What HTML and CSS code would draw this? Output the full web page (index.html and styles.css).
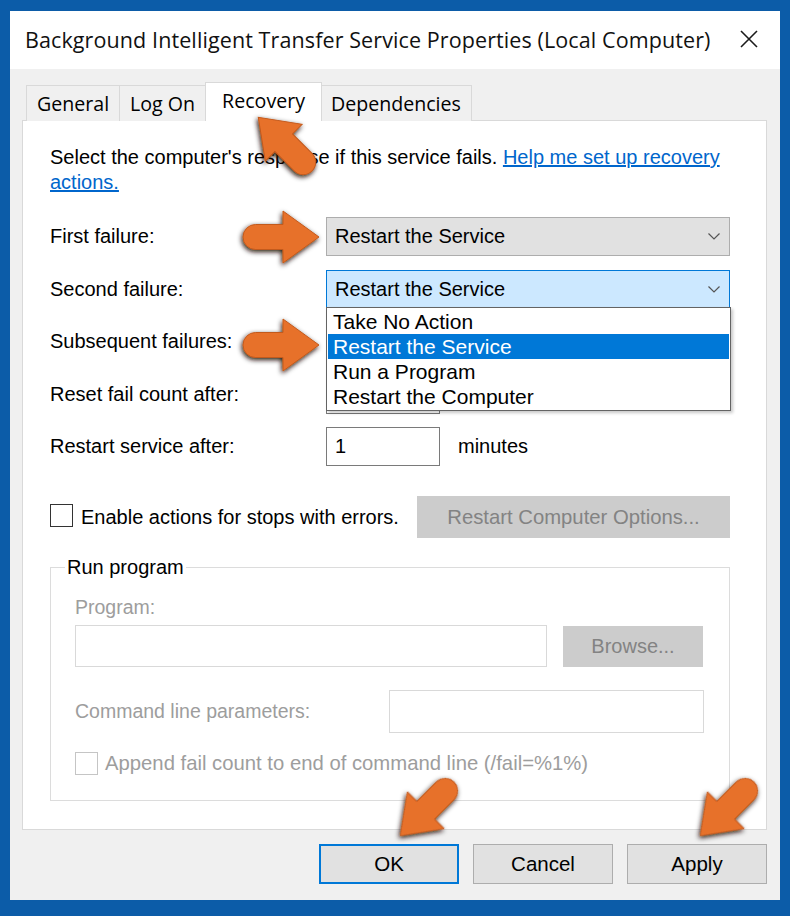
FILE: index.html
```html
<!DOCTYPE html>
<html lang="en">
<head>
<meta charset="utf-8">
<title>Background Intelligent Transfer Service Properties</title>
<link rel="stylesheet" href="styles.css">
</head>
<body>
<div class="window">
  <div class="titlebar">
    <span class="title">Background Intelligent Transfer Service Properties (Local Computer)</span>
    <span class="close"><svg width="18" height="18" viewBox="0 0 18 18"><path d="M1 1 L17 17 M17 1 L1 17" stroke="#1b1b1b" stroke-width="1.6" fill="none"/></svg></span>
  </div>
  <div class="client">
    <div class="tabs">
      <div class="tab">General</div>
      <div class="tab">Log On</div>
      <div class="tab selected">Recovery</div>
      <div class="tab">Dependencies</div>
    </div>
    <div class="panel">
      <p class="intro">Select the computer's response if this service fails. <a class="link" href="#">Help me set up recovery actions.</a></p>
      <div class="form">
        <div class="label">First failure:</div>
        <div class="combo combo-plain"><span>Restart the Service</span><svg class="chev" width="12" height="7" viewBox="0 0 12 7"><polyline points="0.5,0.5 6,6 11.5,0.5" fill="none" stroke="#555" stroke-width="1.2"/></svg></div>
        <div class="label">Second failure:</div>
        <div class="combo combo-focus"><span>Restart the Service</span><svg class="chev" width="12" height="7" viewBox="0 0 12 7"><polyline points="0.5,0.5 6,6 11.5,0.5" fill="none" stroke="#555" stroke-width="1.2"/></svg></div>
        <div class="label">Subsequent failures:</div>
        <div class="combo combo-plain"></div>
        <div class="label">Reset fail count after:</div>
        <div class="cell"><div class="input"></div></div>
        <div class="label">Restart service after:</div>
        <div class="cell"><div class="input">1</div><span class="unit">minutes</span></div>
        <ul class="dropdown">
          <li>Take No Action</li>
          <li class="hl">Restart the Service</li>
          <li>Run a Program</li>
          <li>Restart the Computer</li>
        </ul>
      </div>
      <div class="errors-row">
        <span class="checkbox"></span>
        <span class="check-label">Enable actions for stops with errors.</span>
        <span class="btn-disabled btn-options">Restart Computer Options...</span>
      </div>
      <fieldset class="group">
        <legend>Run program</legend>
        <div class="dim prog-label">Program:</div>
        <div class="prog-row">
          <div class="input-dim prog-input"></div>
          <span class="btn-disabled btn-browse">Browse...</span>
        </div>
        <div class="cmd-row">
          <span class="dim">Command line parameters:</span>
          <div class="input-dim cmd-input"></div>
        </div>
        <div class="append-row">
          <span class="checkbox checkbox-dim"></span>
          <span class="dim append-text">Append fail count to end of command line (/fail=%1%)</span>
        </div>
      </fieldset>
    </div>
    <div class="buttons">
      <span class="btn btn-default">OK</span>
      <span class="btn">Cancel</span>
      <span class="btn">Apply</span>
    </div>
  </div>
</div>
<svg class="arrows" width="790" height="916" viewBox="0 0 790 916">
  <defs>
    <filter id="sh" x="-30%" y="-30%" width="160%" height="160%">
      <feDropShadow dx="-1" dy="2" stdDeviation="2.6" flood-color="#1e0d00" flood-opacity="0.95"/>
    </filter>
    <path id="arr" d="M12.5,-12.5 L40,-12.5 L40,-26 L76,0 L40,26 L40,12.5 L12.5,12.5 A12.5,12.5 0 0 1 12.5,-12.5 Z"/>
  </defs>
  <g filter="url(#sh)" fill="#e7712b" stroke="#c35a1d" stroke-width="1">
    <use href="#arr" transform="translate(312 171) rotate(225)"/>
    <use href="#arr" transform="translate(243 237)"/>
    <use href="#arr" transform="translate(243 345)"/>
    <use href="#arr" transform="translate(454 782) rotate(135)"/>
    <use href="#arr" transform="translate(754 782) rotate(135)"/>
  </g>
</svg>
</body>
</html>
```
FILE: styles.css
```css
* { box-sizing: border-box; }
html, body { margin: 0; padding: 0; }
body {
  width: 790px;
  height: 916px;
  background: #0c5ca8;
  font-family: "Liberation Sans", Arial, sans-serif;
  font-size: 20px;
  color: #000;
  position: relative;
  overflow: hidden;
}
.window {
  position: absolute;
  left: 10px;
  top: 11px;
  width: 770px;
  height: 889px;
  display: flex;
  flex-direction: column;
  background: #f0f0f0;
}
.titlebar {
  height: 58px;
  background: #fff;
  display: flex;
  align-items: center;
  padding-left: 15px;
  padding-bottom: 2px;
}
.title {
  font-family: "Open Sans", "Noto Sans", sans-serif;
  font-size: 21.5px;
  letter-spacing: 0.1px;
  color: #111;
  white-space: nowrap;
}
.close {
  margin-left: auto;
  margin-right: 22px;
  width: 18px;
  height: 18px;
  display: flex;
}
.client {
  flex: 1;
  padding: 13px 13px 15px 12px;
  display: flex;
  flex-direction: column;
}
.tabs {
  display: flex;
  align-items: flex-end;
  height: 39px;
  margin-left: 4px;
  margin-bottom: -1px;
  position: relative;
  z-index: 1;
  font-family: "Open Sans", "Noto Sans", sans-serif;
  font-size: 19.6px;
}
.tab {
  height: 36px;
  padding: 0 10px 1px 10px;
  border: 1px solid #d9d9d9;
  border-bottom: none;
  background: #f0f0f0;
  display: flex;
  align-items: center;
  margin-left: -1px;
  color: #000;
}
.tab:first-child { margin-left: 0; }
.tab.selected {
  height: 39px;
  background: #fff;
  padding: 0 16px 4px 16px;
  margin-left: -1px;
  margin-right: -1px;
  position: relative;
  z-index: 2;
}
.panel {
  height: 710px;
  background: #fff;
  border: 1px solid #d9d9d9;
  padding: 24px 36px 0 27px;
  display: flex;
  flex-direction: column;
}
.intro {
  margin: 0;
  line-height: 25px;
}
.link {
  color: #0066cc;
  text-decoration: underline;
}
.form {
  margin-top: 22px;
  display: grid;
  grid-template-columns: 276px 404px;
  grid-auto-rows: 39px;
  row-gap: 13.5px;
  position: relative;
}
.label {
  display: flex;
  align-items: center;
}
.combo {
  display: flex;
  align-items: center;
  padding: 0 8px 0 8px;
  border: 1px solid #adadad;
  background: #e1e1e1;
}
.combo-focus {
  background: #cce8ff;
  border-color: #0078d7;
}
.chev { margin-left: auto; margin-right: 1px; }
.cell {
  display: flex;
  align-items: center;
}
.input {
  width: 114px;
  height: 39px;
  border: 1px solid #7a7a7a;
  background: #fff;
  padding-left: 8px;
  display: flex;
  align-items: center;
}
.unit { margin-left: 18px; }
.dropdown {
  position: absolute;
  left: 276px;
  top: 90px;
  width: 405px;
  margin: 0;
  padding: 1px;
  list-style: none;
  background: #fff;
  border: 1px solid #646464;
  box-shadow: 2px 2px 3px rgba(0,0,0,0.22);
  z-index: 3;
  font-size: 21px;
}
.dropdown li {
  height: 25px;
  line-height: 25px;
  padding-left: 5px;
}
.dropdown li.hl {
  background: #0078d7;
  color: #fff;
}
.errors-row {
  margin-top: 30px;
  height: 42px;
  display: flex;
  align-items: center;
}
.checkbox {
  width: 23px;
  height: 23px;
  border: 1px solid #333;
  background: #fff;
  flex: none;
  margin-top: -3px;
}
.check-label { margin-left: 8px; }
.btn-disabled {
  background: #cccccc;
  color: #838383;
  display: flex;
  align-items: center;
  justify-content: center;
}
.btn-options {
  margin-left: auto;
  width: 313px;
  height: 42px;
  font-size: 20.3px;
}
.group {
  margin: 16.5px 0 0 0;
  padding: 15px 26px 25px 24px;
  border: 1px solid #dcdcdc;
  min-width: 0;
}
.group legend {
  padding: 0 2px;
  margin-left: -10px;
  line-height: 25px;
}
.dim { color: #9d9d9d; font-size: 19.5px; }
.prog-label { line-height: 25px; }
.prog-row {
  margin-top: 5.5px;
  display: flex;
  align-items: center;
  height: 42px;
}
.input-dim {
  border: 1px solid #d9d9d9;
  background: #fff;
}
.prog-input { width: 472px; height: 42px; }
.btn-browse {
  width: 140px;
  height: 41px;
  margin-left: 16px;
}
.cmd-row {
  margin-top: 23px;
  height: 43px;
  display: flex;
  align-items: center;
}
.cmd-input {
  width: 315px;
  height: 43px;
  margin-left: auto;
  margin-right: -1px;
}
.append-row {
  margin-top: 18px;
  height: 24px;
  display: flex;
  align-items: center;
  gap: 7px;
}
.append-text { font-size: 20.3px; }
.checkbox-dim { border-color: #c5c5c5; margin-top: 0; }
.buttons {
  margin-top: 14px;
  display: flex;
  justify-content: flex-end;
  gap: 14px;
}
.btn {
  width: 140px;
  height: 40px;
  background: #e1e1e1;
  border: 1px solid #adadad;
  display: flex;
  align-items: center;
  justify-content: center;
  font-size: 20.5px;
}
.btn-default {
  border: 2px solid #0078d7;
}
.arrows {
  position: absolute;
  left: 0;
  top: 0;
  pointer-events: none;
  z-index: 10;
}
```
